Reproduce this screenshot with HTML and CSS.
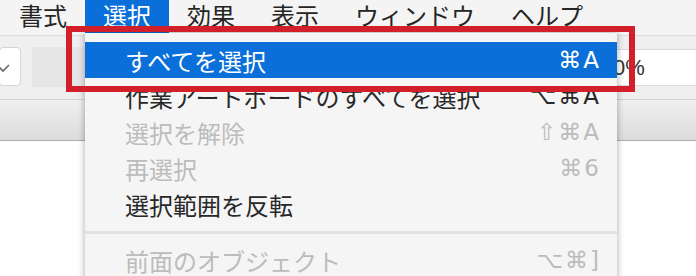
FILE: index.html
```html
<!DOCTYPE html>
<html lang="ja">
<head>
<meta charset="utf-8">
<link rel="stylesheet" href="styles.css">
</head>
<body>
<div class="screen">
  <div class="menubar">
    <div class="title">書式</div>
    <div class="title active">選択</div>
    <div class="title">効果</div>
    <div class="title">表示</div>
    <div class="title">ウィンドウ</div>
    <div class="title">ヘルプ</div>
  </div>
  <div class="toolbar">
    <div class="dropdown">
      <svg width="21" height="39" viewBox="0 0 21 39"><path d="M-1 19 L3 23 L9 17" fill="none" stroke="#6a6a6a" stroke-width="1.6"/></svg>
    </div>
    <div class="graybox"></div>
    <div class="field">0%</div>
  </div>
  <div class="band"></div>
  <div class="canvas"></div>

  <div class="menu">
    <div class="item selected"><span>すべてを選択</span><span class="key">⌘A</span></div>
    <div class="item"><span>作業アートボードのすべてを選択</span><span class="key">⌥⌘A</span></div>
    <div class="item disabled"><span>選択を解除</span><span class="key">⇧⌘A</span></div>
    <div class="item disabled"><span>再選択</span><span class="key">⌘6</span></div>
    <div class="item"><span>選択範囲を反転</span><span class="key"></span></div>
    <div class="sep"></div>
    <div class="item disabled"><span>前面のオブジェクト</span><span class="key">⌥⌘]</span></div>
  </div>
  <div class="callout"></div>
</div>
</body>
</html>
```

FILE: styles.css
```css
* { box-sizing: border-box; }
html, body {
  margin: 0;
  padding: 0;
  width: 696px;
  height: 276px;
  overflow: hidden;
  background: #ffffff;
}
.screen {
  position: relative;
  width: 696px;
  height: 276px;
  overflow: hidden;
  font-family: "Noto Sans CJK JP", "Noto Sans", sans-serif;
  font-size: 24px;
  color: #252525;
}
.menubar {
  display: flex;
  align-items: flex-start;
  height: 36px;
  padding-left: 1px;
  background: #f4f4f4;
  border-bottom: 1px solid #dcdcdc;
}
.title {
  padding: 0 18px 3px;
  line-height: 30px;
}
.title.active {
  background: #0b6fd9;
  color: #ffffff;
}
.toolbar {
  display: flex;
  align-items: flex-start;
  height: 64px;
  padding-top: 11px;
  background: #efefef;
  border-bottom: 1px solid #d2d2d2;
}
.dropdown {
  width: 22px;
  height: 39px;
  margin-left: -1px;
  background: #ffffff;
  border: 1px solid #d4d4d4;
  border-radius: 4px;
}
.dropdown svg { display: block; }
.graybox {
  width: 120px;
  height: 40px;
  margin-left: 11px;
  background: #e6e6e6;
}
.field {
  margin-left: auto;
  margin-top: 2px;
  width: 140px;
  height: 37px;
  padding-left: 57px;
  background: #ffffff;
  border-top: 1px solid #dadada;
  border-bottom: 1px solid #dadada;
  font-family: "Liberation Sans", sans-serif;
  font-size: 22px;
  line-height: 35px;
  color: #333;
}
.band {
  height: 41px;
  background: linear-gradient(#f0f0f0, #dcdcdc);
  border-bottom: 1px solid #aeaeae;
}
.canvas {
  height: 135px;
  background: #ffffff;
}
.menu {
  position: absolute;
  left: 85px;
  top: 33px;
  width: 532px;
  height: 260px;
  padding-top: 9px;
  background: #f5f5f5;
  box-shadow: 0 0 7px rgba(0, 0, 0, 0.35);
}
.item {
  display: flex;
  justify-content: space-between;
  align-items: center;
  height: 36px;
  padding: 0 18px 0 40px;
  color: #282828;
  white-space: nowrap;
}
.item.selected {
  background: #0b6fd9;
  color: #ffffff;
}
.item.disabled { color: #bcbcbc; }
.key {
  font-family: "DejaVu Sans", "Noto Sans", sans-serif;
  font-size: 23px;
  letter-spacing: 2px;
  margin-right: -2px;
}
.sep {
  height: 3px;
  margin: 9px 0 8px;
  background: #e2e2e2;
}
.callout {
  position: absolute;
  left: 66px;
  top: 26px;
  width: 569px;
  height: 66px;
  border: 6px solid #d21f29;
}
```
